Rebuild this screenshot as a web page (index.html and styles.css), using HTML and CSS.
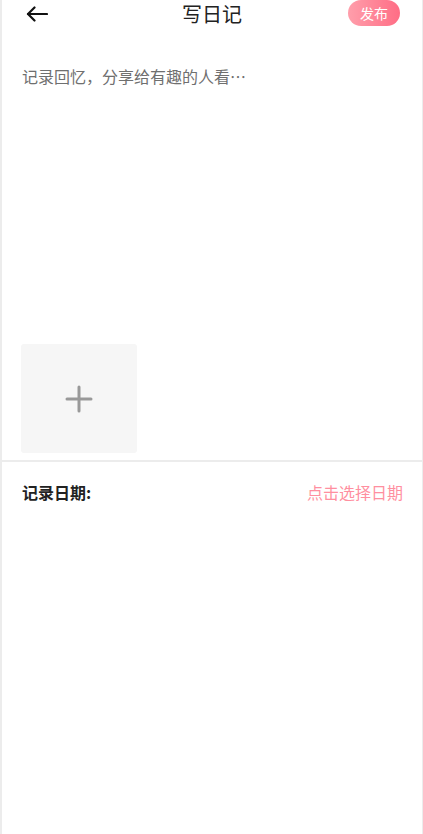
FILE: index.html
```html
<!DOCTYPE html>
<html lang="zh">
<head>
<meta charset="utf-8">
<title>写日记</title>
<link rel="stylesheet" href="styles.css">
</head>
<body>
<div class="page">
  <header class="header">
    <button class="back" aria-label="返回">
      <svg width="22" height="16" viewBox="0 0 22 16" fill="none" stroke="#111" stroke-width="2.2" stroke-linecap="round" stroke-linejoin="round">
        <path d="M21 8H2"/>
        <path d="M8.5 1.5L2 8l6.5 6.5"/>
      </svg>
    </button>
    <h1 class="title">写日记</h1>
    <button class="publish">发布</button>
  </header>
  <section class="editor">
    <div class="placeholder">记录回忆，分享给有趣的人看…</div>
    <div class="add-box">
      <svg width="28" height="28" viewBox="0 0 28 28" stroke="#999" stroke-width="3" stroke-linecap="round">
        <path d="M14 2v24"/>
        <path d="M2 14h24"/>
      </svg>
    </div>
  </section>
  <div class="date-row">
    <span class="date-label">记录日期:</span>
    <span class="date-pick">点击选择日期</span>
  </div>
</div>
</body>
</html>
```
FILE: styles.css
```css
html, body {
  margin: 0;
  padding: 0;
}
body {
  background: #ececec;
  font-family: "Noto Sans CJK SC", "Noto Sans", sans-serif;
}
.page {
  margin: 0 1px 0 2px;
  background: #fff;
  height: 834px;
  display: flex;
  flex-direction: column;
}
.header {
  height: 26px;
  display: flex;
  align-items: center;
  justify-content: space-between;
  padding: 0 22px 0 24px;
  position: relative;
}
.back {
  background: none;
  border: 0;
  padding: 0;
  width: 22px;
  height: 16px;
  display: flex;
  margin-top: 2px;
}
.title {
  position: absolute;
  left: 0;
  right: 0;
  top: 0;
  margin: 0;
  text-align: center;
  font-size: 20px;
  font-weight: 400;
  line-height: 27px;
  color: #222;
  pointer-events: none;
}
.publish {
  width: 52px;
  height: 26px;
  border: 0;
  border-radius: 13px;
  background: linear-gradient(90deg, #ff9eab, #ff6d85);
  color: #fff;
  font-family: inherit;
  font-size: 14px;
  line-height: 26px;
  padding: 0;
}
.editor {
  height: 436px;
  display: flex;
  flex-direction: column;
  justify-content: space-between;
  padding: 0 20px 7px 19px;
  box-sizing: border-box;
  border-bottom: 2px solid #ececec;
}
.placeholder {
  margin-top: 38px;
  font-size: 16px;
  line-height: 24px;
  color: #6f6f6f;
  padding-left: 1px;
}
.add-box {
  width: 116px;
  height: 109px;
  background: #f6f6f6;
  border-radius: 3px;
  display: flex;
  align-items: center;
  justify-content: center;
}
.date-row {
  height: 60px;
  display: flex;
  align-items: center;
  justify-content: space-between;
  padding: 0 19px 0 20px;
  font-size: 16px;
}
.date-label {
  font-weight: 700;
  color: #222;
}
.date-pick {
  color: #ff8fa0;
}
```
